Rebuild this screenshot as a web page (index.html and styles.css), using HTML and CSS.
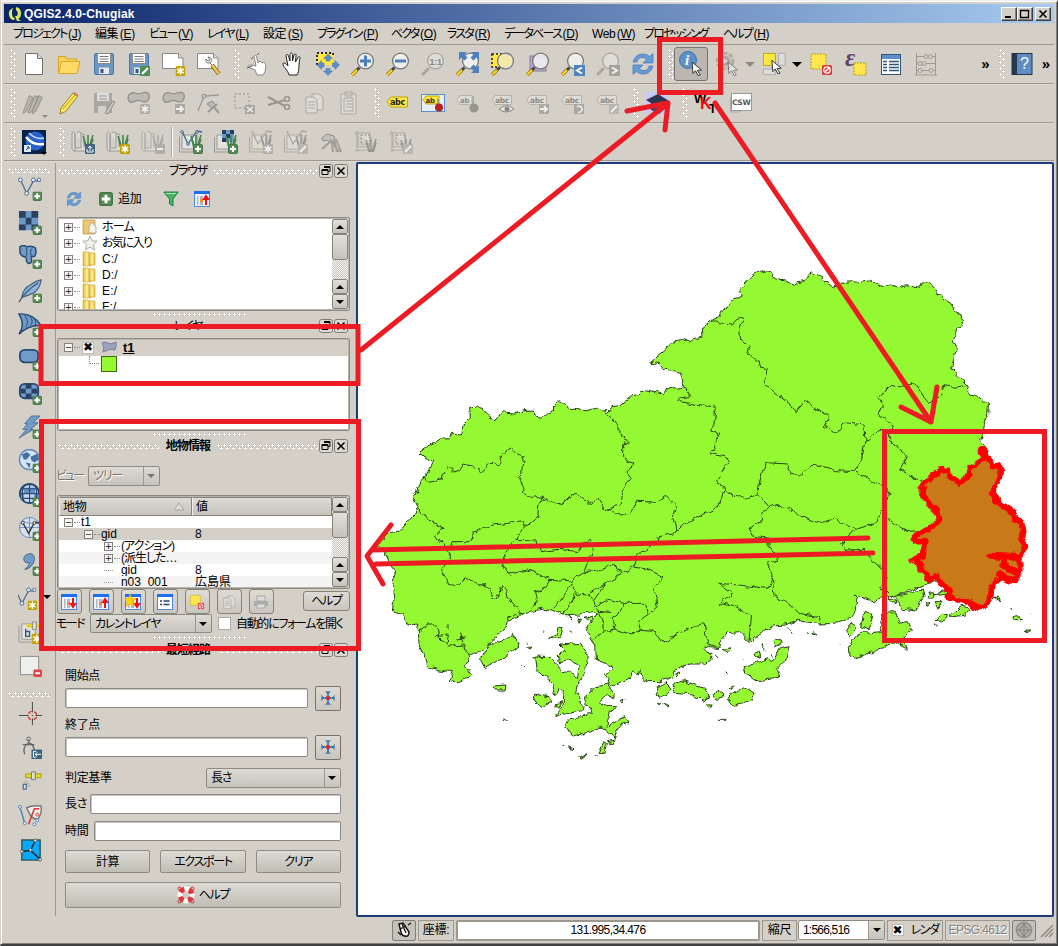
FILE: index.html
```html
<!DOCTYPE html>
<html lang="ja">
<head>
<meta charset="utf-8">
<title>QGIS2.4.0-Chugiak</title>
<link rel="stylesheet" href="styles.css">
</head>
<body>
<svg class="defs" width="0" height="0" aria-hidden="true">
<defs>
<linearGradient id="gold" x1="0" x2="1"><stop offset="0" stop-color="#e0bc3c"/><stop offset=".5" stop-color="#fff0a0"/><stop offset="1" stop-color="#e8c040"/></linearGradient>
<!-- badges -->
<symbol id="plus" viewBox="0 0 10 10"><rect x=".5" y=".5" width="9" height="9" rx="1.5" fill="#5a8c5a" stroke="#3f7745"/><path d="M5 2v6M2 5h6" stroke="#fff" stroke-width="2"/></symbol>
<symbol id="star" viewBox="0 0 10 10"><rect width="10" height="10" rx="1.5" fill="#c4a000"/><path d="M5 1.2v7.6M1.7 3l6.6 4M8.300 3l-6.600 4" stroke="#fff" stroke-width="1.500"/></symbol>
<symbol id="gstar" viewBox="0 0 10 10"><rect width="10" height="10" rx="1.5" fill="#b0ada6"/><path d="M5 1.200v7.600M1.700 3l6.600 4M8.300 3l-6.600 4" stroke="#eee" stroke-width="1.500"/></symbol>
<symbol id="garr" viewBox="0 0 10 10"><rect width="10" height="10" rx="1" fill="#aaa7a0"/><path d="M1 5h6M5 2l3 3-3 3" stroke="#eee" stroke-width="1.800" fill="none"/></symbol>
<symbol id="gpen" viewBox="0 0 10 10"><rect width="10" height="10" rx="1" fill="#b8b5ae"/><path d="M2 8l6-6" stroke="#eee" stroke-width="2"/></symbol>
<symbol id="gmin" viewBox="0 0 10 10"><rect width="10" height="10" rx="1" fill="#b0ada6"/><path d="M2 5h6" stroke="#eee" stroke-width="2"/></symbol>
<symbol id="nogo" viewBox="0 0 10 10"><rect width="10" height="10" rx="1.500" fill="#d83c3c"/><circle cx="5" cy="5" r="3.200" fill="none" stroke="#fff" stroke-width="1.200"/><path d="M3 7l4-4" stroke="#fff" stroke-width="1.200"/></symbol>
<symbol id="cursor" viewBox="0 0 12 15"><path d="M1 1l9.500 8-4.200.3 3 4.700-2.300.5-2.500-4.800L2 12.500z" fill="#fff" stroke="#333"/></symbol>
<!-- file icons -->
<symbol id="new" viewBox="0 0 24 24"><path d="M3.500 1.500h12l5 5v16h-17z" fill="#fff" stroke="#6f6f6f"/><path d="M15.500 1.500v5h5" fill="#ddd" stroke="#6f6f6f"/></symbol>
<symbol id="open" viewBox="0 0 24 24"><path d="M1.500 21V4.500h7l1 2.500h10v3" fill="#f6d25a" stroke="#d8a21c"/><path d="M1.500 21.500l3-12h18.500l-3 12z" fill="#ffd966" stroke="#dba827"/></symbol>
<symbol id="floppy" viewBox="0 0 24 24"><rect x="2.500" y="1.500" width="19" height="21" rx="1.500" fill="#6e96c4" stroke="#4a74a8"/><rect x="5.500" y="1.500" width="13" height="10" fill="#fff" stroke="#8a8a8a"/><path d="M7.500 4.500h9M7.500 7h9M7.500 9.500h9" stroke="#777"/><rect x="7" y="15.500" width="10" height="6.500" fill="#e8e8e8"/><path d="M8.500 17h3v4h-3z" fill="#35578a"/></symbol>
<symbol id="save" viewBox="0 0 24 24"><use href="#floppy"/></symbol>
<symbol id="saveas" viewBox="0 0 24 24"><use href="#floppy"/><rect x="13" y="14" width="10" height="10" rx="1" fill="#4b8f57"/><path d="M15 22l6-6" stroke="#fff" stroke-width="2.200"/></symbol>
<symbol id="compnew" viewBox="0 0 24 24"><path d="M.5 1.500h16l4.500 4.500v10.500H.5z" fill="#fff" stroke="#888"/><path d="M16.500 1.500V6H21" fill="#ddd" stroke="#888"/><use href="#star" x="13.500" y="14" width="10" height="10"/></symbol>
<symbol id="compman" viewBox="0 0 24 24"><path d="M.5 1.500h16l4.500 4.500v10.500H.5z" fill="#fff" stroke="#888"/><path d="M16.500 1.500V6H21" fill="#ddd" stroke="#888"/><path d="M9 7c-1 4 2 5 5 3 2-2 0-5-3-5l2 3-2 1zM13 11l3 3" fill="#eee" stroke="#777"/><path d="M15 13l7 9" stroke="#765b18" stroke-width="4"/><path d="M15 13l7 9" stroke="#f0cc50" stroke-width="2.500"/></symbol>
<!-- navigation -->
<symbol id="touch" viewBox="0 0 24 24"><path d="M8 4c1-1 2-1 2.500 0l1.500 7 2-2 2 2 2-1 2 3-1 7-2 3h-6l-2-5-7-3c0-2 1-2 3-2l5 1z" fill="#fff" stroke="#888"/><path d="M1 16l5-2M7 5L5 7M11 3l2-2" stroke="#555"/></symbol>
<symbol id="hand" viewBox="0 0 24 24"><path d="M8 23c-1-5-6-8-6-11 0-2 2-1.500 5 2L5 4c0-2 2-2 2.500 0L9 9V2.500c0-2 2.500-2 2.500 0V9l1.500-6c.5-2 2.500-1 2 1L14.500 10l2.500-4.500c1-1.500 2.500-.5 2 1-2 6 0 12-3 16.500z" fill="#fff" stroke="#222"/></symbol>
<symbol id="panto" viewBox="0 0 24 24"><path d="M1 1h16v12H1z" fill="#ffe640"/><path d="M1 13V1h16v3" fill="none" stroke="#222" stroke-width="1.800" stroke-dasharray="2 2"/><g fill="#5d8fca" stroke="#3f70a8" stroke-width=".5"><path d="M12 2l4.500 4.500H14V9h-4V6.500H7.500zM12 23.500l4.500-4.500H14v-2.500h-4V19H7.500zM1 13l4.500-4.500V11H8v4H5.500v2.500zM23.500 13L19 8.500V11h-2.500v4H19v2.500z"/></g></symbol>
<symbol id="glass" viewBox="0 0 24 24"><path d="M8.500 15.500L5 19" stroke="#444" stroke-width="3"/><path d="M6 18L1 23" stroke="#8a6c10" stroke-width="3.400"/><path d="M6 18L1 23" stroke="#ffd52a" stroke-width="2.200"/><circle cx="14.500" cy="9" r="7.900" fill="#f4f6f4" fill-opacity=".8" stroke="#777" stroke-width="1.300"/></symbol>
<symbol id="gglass" viewBox="0 0 24 24"><path d="M8 16L1 23" stroke="#aaa69e" stroke-width="3"/><circle cx="14.500" cy="9" r="7.900" fill="#dedcd6" stroke="#aaa69e" stroke-width="1.300"/></symbol>
<symbol id="zin" viewBox="0 0 24 24"><use href="#glass"/><path d="M14.500 3.500v11M9 9h11" stroke="#4d80bd" stroke-width="3"/></symbol>
<symbol id="zout" viewBox="0 0 24 24"><use href="#glass"/><path d="M9 9h11" stroke="#4d80bd" stroke-width="3"/></symbol>
<symbol id="z11" viewBox="0 0 24 24"><use href="#gglass"/><text x="8.500" y="12.500" font-family="Liberation Sans" font-weight="bold" font-size="9" fill="#8a8680">1:1</text></symbol>
<symbol id="zfull" viewBox="0 0 24 24"><use href="#glass"/><path d="M3 0h8L8.500 2.500l3 3-3 3-3-3L3 8zM23 0v8l-2.500-2.500-3 3-3-3 3-3L15 0zM23 21h-8l2.500-2.500-3-3 3-3 3 3L23 13z" fill="#4d80bd"/></symbol>
<symbol id="zsel" viewBox="0 0 24 24"><rect x="1" y="2" width="16" height="13" fill="#ffe640" stroke="#222" stroke-width="1.500" stroke-dasharray="2 2"/><use href="#glass"/><circle cx="14.500" cy="9" r="6" fill="#f1e9a4"/></symbol>
<symbol id="zlay" viewBox="0 0 24 24"><rect x="4" y="4" width="16" height="15" fill="#baa9ca" stroke="#8b7c98"/><use href="#glass"/></symbol>
<symbol id="zlast" viewBox="0 0 24 24"><use href="#glass"/><rect x="13" y="13" width="11" height="11" fill="#4f83bd"/><path d="M21 15.500l-5 3 5 3" fill="none" stroke="#fff" stroke-width="2"/></symbol>
<symbol id="znext" viewBox="0 0 24 24"><use href="#gglass"/><rect x="13" y="13" width="11" height="11" fill="#a5a29b"/><path d="M16 15.500l5 3-5 3" fill="none" stroke="#eee" stroke-width="2"/></symbol>
<symbol id="refresh" viewBox="0 0 24 24"><g fill="#689ad4" stroke="#4379b5" stroke-width=".7"><path d="M2 10C4 1 14 0 18.500 4.500L22 1.500V11H12l3.500-3.500C12 4 7 5 6 10z"/><path d="M22 14c-2 9-12 10-16.500 5.500L2 22.500V13h10l-3.500 3.500C12 20 17 19 18 14z"/></g></symbol>
<!-- attributes -->
<symbol id="info" viewBox="0 0 26 26"><circle cx="10" cy="9" r="8.500" fill="#5d91cc" stroke="#3e72ae"/><text x="7" y="14" font-family="Liberation Serif" font-style="italic" font-weight="bold" font-size="15" fill="#fff">i</text><use href="#cursor" x="13" y="10" width="12" height="15"/></symbol>
<symbol id="action" viewBox="0 0 24 24"><circle cx="10" cy="9" r="8" fill="#cbc7c0" stroke="#b0aca4" stroke-width="3" stroke-dasharray="4 2"/><circle cx="10" cy="9" r="5" fill="#aaa69e"/><path d="M8 6l5 3-5 3z" fill="#ddd"/><g opacity=".5"><use href="#cursor" x="12" y="9" width="12" height="15"/></g></symbol>
<symbol id="select" viewBox="0 0 26 26"><rect x="1.500" y="1.500" width="13" height="13" fill="#ffe640" stroke="#bca514"/><path d="M18 1.500h7v13h-7zM1.500 18.500h13v6h-13z" fill="#ddd" stroke="#aaa"/><use href="#cursor" x="9" y="8" width="14" height="16"/></symbol>
<symbol id="desel" viewBox="0 0 24 24"><rect x="2" y="2" width="15" height="15" fill="#ffe64d" stroke="#b79e10" stroke-dasharray="2 1"/><use href="#nogo" x="13" y="13" width="10" height="10"/></symbol>
<symbol id="eps" viewBox="0 0 24 24"><text x="1" y="14" font-family="Liberation Serif" font-style="italic" font-weight="bold" font-size="25" fill="#633e70">ε</text><rect x="10" y="11" width="12" height="12" fill="#ffe64d" stroke="#b79e10" stroke-dasharray="2 1"/></symbol>
<symbol id="table" viewBox="0 0 24 24"><rect x="2.500" y="2.500" width="19" height="20" fill="#fff" stroke="#315577"/><rect x="3" y="3" width="18" height="4" fill="#5d8fca"/><path d="M4 9.500h4M4 12.500h4M4 15.500h4M4 18.500h4M10 9.500h10M10 12.500h10M10 15.500h10M10 18.500h10" stroke="#315577" stroke-width="1.300"/></symbol>
<symbol id="abacus" viewBox="0 0 24 24"><g fill="#d4d0c8" stroke="#9d9991"><path d="M2.500 1v22M21.500 1v22M1 23h22M3 4.500h18M3 11.500h18M3 18.500h18"/><circle cx="12" cy="4.500" r="2"/><circle cx="16.500" cy="4.500" r="2"/><circle cx="6" cy="11.500" r="2"/><circle cx="10" cy="11.500" r="2"/><circle cx="6" cy="18.500" r="2"/><circle cx="17" cy="18.500" r="2"/></g></symbol>
<symbol id="book" viewBox="0 0 24 24"><rect x="2" y="1.500" width="20" height="21" fill="#5d8dc4" stroke="#26384d"/><rect x="2" y="1" width="5" height="22" fill="#26384d"/><text x="10" y="17" font-family="Liberation Sans" font-size="16" fill="#fff">?</text></symbol>
<!-- editing -->
<symbol id="pencils" viewBox="0 0 26 26"><g fill="#b7b4ad" stroke="#918e87"><path d="M2 21l6-16 4 2-7 15-4 2zM7 22l7-17 4 2-7 15-4 2zM11 23l7-18 4 2-7 15-4 3z"/></g></symbol>
<symbol id="pencil" viewBox="0 0 24 24"><path d="M4 17L16 2l4.500 3.500-12 15L3 23z" fill="#ffe75d" stroke="#9a8520"/><path d="M16 2l4.500 3.500 1-1.500-4-3z" fill="#c77"/><path d="M6 18L18 4" stroke="#b69a18"/></symbol>
<symbol id="gsave" viewBox="0 0 24 24"><path d="M2 2h18v20H2z" fill="#aaa7a0"/><path d="M5 2h12v8H5z" fill="#ddd"/><path d="M7 5h8M7 8h8" stroke="#999"/><path d="M6 15h8v7H6z" fill="#d4d0c8"/><path d="M13 22l8-12 2 1-7 12z" fill="#ccc" stroke="#918e87"/></symbol>
<symbol id="gblob" viewBox="0 0 24 24"><path d="M1 7c0-4 4-6 7-5s4 1 7 0c6-2 8 1 7 5s-4 5-8 3-5 0-8 1-5-1-5-4z" fill="#bdbab3" stroke="#918e87" stroke-width="1.300"/></symbol>
<symbol id="addf" viewBox="0 0 24 24"><use href="#gblob"/><use href="#gstar" x="13" y="13" width="10" height="10"/></symbol>
<symbol id="movef" viewBox="0 0 24 24"><use href="#gblob"/><use href="#garr" x="13" y="13" width="10" height="10"/></symbol>
<symbol id="node" viewBox="0 0 24 24"><path d="M1 20L7 5l15-1" fill="none" stroke="#999" stroke-width="1.300"/><circle cx="7" cy="5" r="2" fill="#ccc" stroke="#888"/><path d="M10 13l5-3 4 4-4 3z" fill="#bbb" stroke="#888"/><path d="M16 15l6 7M11 21l9-8" stroke="#999" stroke-width="2"/></symbol>
<symbol id="gdel" viewBox="0 0 24 24"><path d="M3 3h14v14H3z" fill="none" stroke="#a5a29b" stroke-width="1.300" stroke-dasharray="2 2"/><rect x="13" y="14" width="10" height="9" fill="#aaa7a0"/><path d="M15 16l6 5m0-5l-6 5" stroke="#eee" stroke-width="1.500"/></symbol>
<symbol id="scis" viewBox="0 0 24 24"><path d="M1 6l17 9M1 14l17-5" stroke="#9a968f" stroke-width="2"/><circle cx="20" cy="8" r="2.500" fill="none" stroke="#9a968f" stroke-width="1.500"/><circle cx="20" cy="16" r="2.500" fill="none" stroke="#9a968f" stroke-width="1.500"/></symbol>
<symbol id="copy" viewBox="0 0 24 24"><g fill="#dedbd4" stroke="#aaa7a0"><path d="M10 3h7l4 4v12H10z"/><path d="M4 6h8l3 3v13H4z"/><path d="M6 11h7M6 14h7M6 17h7"/></g></symbol>
<symbol id="paste" viewBox="0 0 24 24"><g fill="#dedbd4" stroke="#aaa7a0"><path d="M4 3h15v20H4zM8 1h7v4H8zM7 7h9v13H7z"/><path d="M9 10h6M9 13h6M9 16h6"/></g></symbol>
<!-- labels -->
<symbol id="tag" viewBox="0 0 24 24"><path d="M1 11l4-5h16.500v10H5z" fill="#ffe640" stroke="#c3a600"/><text x="4" y="14" font-family="DejaVu Sans" font-weight="bold" font-size="8" fill="#222">abc</text></symbol>
<symbol id="tagpin" viewBox="0 0 24 24"><rect x=".5" y="3.500" width="23" height="17" fill="#e6eefa" stroke="#5a90d0"/><path d="M2 8.500l3-3.500h13v8H5z" fill="#ffe640" stroke="#c3a600"/><text x="4.500" y="11.500" font-family="DejaVu Sans" font-weight="bold" font-size="7" fill="#333">ab</text><path d="M17 8v8" stroke="#888" stroke-width="1.500"/><circle cx="18" cy="16.500" r="4" fill="#b52222"/></symbol>
<symbol id="gtag" viewBox="0 0 24 24"><path d="M1 9l3-4.500h16.500v9H4z" fill="#dfdcd5" stroke="#b6b3ac"/><text x="4" y="12" font-family="DejaVu Sans" font-weight="bold" font-size="7.500" fill="#8e8b84">abc</text></symbol>
<symbol id="gpin" viewBox="0 0 24 24"><path d="M1 8.500l3-4h12v9H4z" fill="#dfdcd5" stroke="#b6b3ac"/><text x="4" y="12" font-family="DejaVu Sans" font-weight="bold" font-size="7" fill="#8e8b84">ab</text><path d="M17 5v10" stroke="#aaa" stroke-width="2"/><circle cx="18" cy="17" r="4.500" fill="#99968f"/></symbol>
<symbol id="geye" viewBox="0 0 24 24"><use href="#gtag"/><path d="M8 18q8-7 15 0q-8 6-15 0z" fill="#e5e2dc" stroke="#888"/><circle cx="16" cy="18" r="2.500" fill="#888"/></symbol>
<symbol id="gtarr" viewBox="0 0 24 24"><use href="#gtag"/><use href="#garr" x="13" y="13" width="10" height="10"/></symbol>
<symbol id="gtrot" viewBox="0 0 24 24"><use href="#gtag"/><rect x="13" y="13" width="10" height="10" fill="#aaa7a0"/><path d="M16 16a3 3 0 1 1 1 5" fill="none" stroke="#eee" stroke-width="1.500"/></symbol>
<symbol id="gtpen" viewBox="0 0 24 24"><use href="#gtag"/><use href="#gpen" x="13" y="13" width="10" height="10"/></symbol>
<symbol id="cap" viewBox="0 0 24 24"><rect x="1" y="1" width="22" height="22" fill="#c8c8f4"/><path d="M1 9l12-6 11 7-10 7z" fill="#2d3550"/><path d="M6 12v7l8 4 7-6v-4" fill="#414861"/></symbol>
<symbol id="wkt" viewBox="0 0 24 24"><text x="0" y="12" font-family="Liberation Sans" font-weight="bold" font-size="13">W</text><text x="6" y="18" font-family="Liberation Sans" font-weight="bold" font-size="16" fill="#e11">K</text><text x="15" y="22" font-family="Liberation Sans" font-weight="bold" font-size="12">T</text></symbol>
<symbol id="csw" viewBox="0 0 24 24"><path d="M1.500 21V6h10v15z" fill="none" stroke="#aaa"/><rect x="2.500" y="2.500" width="20" height="17" fill="#fff" stroke="#999"/><text x="3" y="13.500" font-family="DejaVu Sans" font-weight="bold" font-size="7.500" fill="#555">CSW</text></symbol>
<!-- grass -->
<symbol id="earth" viewBox="0 0 26 26"><rect x="1" y="1" width="24" height="24" fill="#08234a"/><circle cx="14" cy="12" r="9.500" fill="#2a62cc"/><path d="M5 8q7 9 18 7" stroke="#fff" stroke-width="2.500" fill="none"/><path d="M8 4q7 7 15 5" stroke="#cfe0ff" stroke-width="1.500" fill="none"/><rect x="3" y="16" width="7" height="7" fill="#dceaff"/><path d="M5 21l3-3m-2 0h2v2" stroke="#246" fill="none"/><path d="M20 23h6l-3 3z"/></symbol>
<symbol id="roll" viewBox="0 0 24 24"><path d="M4 4v17h15M1 3v16l3 3M1 3q2-3 3 1v14M6 3q2-3 4 0v15H4M10 4h3v13" fill="#dedbd4" stroke="#999"/></symbol>
<symbol id="grass" viewBox="0 0 24 24"><path d="M16 18l-4-12M17 18V5M18 18l4-13M15 18l-2-8M19 18l3-9" stroke="#43854b" stroke-width="1.600"/></symbol>
<symbol id="ggrass" viewBox="0 0 24 24"><path d="M16 18l-4-12M17 18V5M18 18l4-13M15 18l-2-8M19 18l3-9" stroke="#999690" stroke-width="1.500"/></symbol>
<symbol id="g1" viewBox="0 0 24 24"><use href="#roll"/><use href="#grass"/><rect x="14" y="14" width="10" height="10" rx="1" fill="#426480"/><path d="M19 21v-5m-2 2l2-2 2 2M16 19v3h6v-3" stroke="#fff" fill="none"/></symbol>
<symbol id="g2" viewBox="0 0 24 24"><use href="#roll"/><use href="#grass"/><use href="#star" x="14" y="14" width="10" height="10"/></symbol>
<symbol id="g3" viewBox="0 0 24 24"><g opacity=".65"><use href="#roll"/><use href="#ggrass"/></g><use href="#gmin" x="14" y="14" width="10" height="10"/></symbol>
<symbol id="g4" viewBox="0 0 24 24"><path d="M.5 7v15H20" fill="none" stroke="#999"/><path d="M3 5h15v14H3z" fill="#e5e3de" stroke="#999"/><use href="#grass"/><path d="M3 1l6 13 9-13 5 1" fill="none" stroke="#35658c" stroke-width="1.300"/><g fill="#fff" stroke="#35658c"><circle cx="3" cy="2" r="1.300"/><circle cx="9" cy="14" r="1.300"/><circle cx="18" cy="2" r="1.300"/></g><use href="#plus" x="14" y="14" width="10" height="10"/></symbol>
<symbol id="g5" viewBox="0 0 24 24"><path d="M.5 7v15H20" fill="none" stroke="#999"/><path d="M3 5h15v14H3z" fill="#e5e3de" stroke="#999"/><path d="M8 0h12v12H8z" fill="#6e99c7"/><path d="M8 0h4v4H8zM16 0h4v4h-4zM12 4h4v4h-4zM8 8h4v4H8z" fill="#233e60"/><use href="#grass"/><use href="#plus" x="14" y="14" width="10" height="10"/></symbol>
<symbol id="g6b" viewBox="0 0 24 24"><path d="M.5 7v15H20" fill="none" stroke="#b0ada6"/><path d="M3 5h15v14H3z" fill="#dedbd5" stroke="#b0ada6"/><use href="#ggrass"/><path d="M3 1l6 13 9-13 5 1" fill="none" stroke="#aaa7a0" stroke-width="1.300"/></symbol>
<symbol id="g6" viewBox="0 0 24 24"><use href="#g6b"/><use href="#gstar" x="14" y="14" width="10" height="10"/></symbol>
<symbol id="g7" viewBox="0 0 24 24"><use href="#g6b"/><use href="#gpen" x="14" y="14" width="10" height="10"/></symbol>
<symbol id="g8" viewBox="0 0 24 24"><path d="M3 8l5-4 7 2 1 4-4 3-4-3-4 1z" fill="#c5c2bb" stroke="#8f8c85"/><path d="M11 9l9 13M3 19l9-8M14 22l-1-10M18 22l-3-13M22 22l-5-13" stroke="#a19e97" stroke-width="2"/></symbol>
<symbol id="g9" viewBox="0 0 24 24"><path d="M3 1v19h18M3 1q-3 1-1 4M1 20q2 3 4 0M4 3h12v14H4z" fill="#dedbd4" stroke="#aaa7a0"/><path d="M7 5h9v9H7z" fill="none" stroke="#888" stroke-dasharray="2 1.500"/><g transform="translate(0 4)"><use href="#ggrass"/></g></symbol>
<symbol id="g10" viewBox="0 0 24 24"><use href="#g9"/><use href="#gpen" x="14" y="14" width="10" height="10"/></symbol>
<!-- layer toolbar -->
<symbol id="v1" viewBox="0 0 24 24"><path d="M3 4l6 13 7-13h6" fill="none" stroke="#4a6c8c" stroke-width="1.300"/><g fill="#e8eef6" stroke="#4a6c8c"><circle cx="2.500" cy="3" r="2"/><circle cx="9" cy="17" r="2"/><circle cx="16" cy="3" r="2"/><circle cx="22" cy="3" r="1.800"/></g></symbol>
<symbol id="lvec" viewBox="0 0 26 26"><use href="#v1" width="24" height="24"/><use href="#plus" x="15" y="15" width="10" height="10"/></symbol>
<symbol id="lras" viewBox="0 0 26 26"><path d="M1 0h20v20H1z" fill="#6b98c8"/><path d="M1 0h7v7H1zM14 0h7v7h-7zM8 7h6v7H8zM1 14h7v6H1zM14 14h7v6h-7z" fill="#2b415f"/><use href="#plus" x="15" y="15" width="10" height="10"/></symbol>
<symbol id="lpg" viewBox="0 0 26 26"><path d="M2 2q4-3 7 0 5-2 9 1 2 5-1 9l-3 0v6q-3 3-5-1l-1-5q-4 1-6-4z" fill="#6f9bcb" stroke="#2b4a70" stroke-width="1.500"/><path d="M9 3v8M14 4q-2 4 0 8" stroke="#2b4a70" fill="none"/><use href="#plus" x="15" y="15" width="10" height="10"/></symbol>
<symbol id="lfeather" viewBox="0 0 26 26"><path d="M4 19Q5 10 13 6 18 2 24 1q-1 8-7 13l-7 3z" fill="#8fb4dc" stroke="#46607c" stroke-width="1.300"/><path d="M1 24Q8 12 21 4" stroke="#46607c" stroke-width="1.300" fill="none"/><use href="#plus" x="15" y="15" width="10" height="10"/></symbol>
<symbol id="lsail" viewBox="0 0 26 26"><path d="M1 1q15-1 23 12-13-1-23 9 7-9 0-21z" fill="#6f9bcb" stroke="#2b4a70" stroke-width="1.500"/><path d="M7 2q5 7 1 13M12 3q5 5 1 10M17 6q3 3 1 7" fill="none" stroke="#2b4a70"/><use href="#plus" x="15" y="15" width="10" height="10"/></symbol>
<symbol id="lora" viewBox="0 0 26 26"><rect x="2" y="3" width="19" height="13" rx="5" fill="#6f9bcb" stroke="#2b4a70" stroke-width="2"/><use href="#plus" x="15" y="15" width="10" height="10"/></symbol>
<symbol id="lorar" viewBox="0 0 26 26"><rect x="2" y="3" width="19" height="15" rx="5" fill="#6f9bcb" stroke="#2b4a70" stroke-width="2"/><path d="M8 3h6v5H8zM3 8h5v5H3zM14 8h6v5h-6zM8 13h6v5H8z" fill="#2b415f"/><use href="#plus" x="15" y="15" width="10" height="10"/></symbol>
<symbol id="lbolt" viewBox="0 0 26 26"><path d="M14 1h9l-7 7h5l-8 7h3L1 24l8-9H5l5-6H7z" fill="#6f9bcb" stroke="#46607c" stroke-width=".8"/><use href="#plus" x="15" y="15" width="10" height="10"/></symbol>
<symbol id="lwms" viewBox="0 0 26 26"><circle cx="12" cy="11" r="10.500" fill="#d5e4f4" stroke="#5e88b6" stroke-width="1.400"/><path d="M4 6l5-3 4 3-4 5-3 0zM13 8l7-3 2 6-5 3-3-2zM8 14l5 1-1 5z" fill="#44709e"/><use href="#plus" x="15" y="15" width="10" height="10"/></symbol>
<symbol id="lwcs" viewBox="0 0 26 26"><circle cx="12" cy="11" r="10" fill="#c6daf0" stroke="#2b4a70" stroke-width="2"/><path d="M6 5h12v6h4v6h-5v-6H6v6H3v-6h3z" fill="#5f8fc4"/><path d="M2 11h20M12 1v20M6 3q-3 8 0 16M18 3q3 8 0 16M4 6h16M4 16h16" stroke="#2b4a70" stroke-width="1.200" fill="none"/><use href="#plus" x="15" y="15" width="10" height="10"/></symbol>
<symbol id="lwfs" viewBox="0 0 26 26"><circle cx="12" cy="11" r="10.500" fill="#d7e2ee" stroke="#5e88b6"/><path d="M2 11h20M12 1v20M5 4q8 5 15 0" stroke="#6a94c2" fill="none"/><path d="M5 6l6 11 6-11h5" fill="none" stroke="#333" stroke-width="1.400"/><circle cx="5" cy="6" r="1.500" fill="#fff" stroke="#333"/><circle cx="17" cy="6" r="1.500" fill="#fff" stroke="#333"/><use href="#plus" x="15" y="15" width="10" height="10"/></symbol>
<symbol id="lcomma" viewBox="0 0 26 26"><path d="M11 2c6-2 8 6 4 11-2 3-5 5-8 5 3-2 5-5 5-7-4 1-6-1-6-4s2-4 5-5z" fill="#6f9bcb" stroke="#46607c"/><use href="#plus" x="15" y="15" width="10" height="10"/></symbol>
<symbol id="lnew" viewBox="0 0 26 26"><g transform="translate(-5 1)"><use href="#v1" width="24" height="24"/></g><use href="#star" x="10" y="15" width="10" height="10"/></symbol>
<symbol id="lgps" viewBox="0 0 26 26"><path d="M1 6v17h13" fill="none" stroke="#999"/><path d="M4 4h14v16H4z" fill="#e5e3de" stroke="#999"/><path d="M8 9v8h4v-5H8" fill="none" stroke="#345a86" stroke-width="1.500"/><path d="M9 4h14v4H9z" fill="#e2d820"/><path d="M15 2h4v8h-4z" fill="#ddd" stroke="#888"/><use href="#star" x="14" y="14" width="11" height="11"/></symbol>
<symbol id="lrem" viewBox="0 0 26 26"><path d="M2.500 2.500h19v19h-19z" fill="#eeeeec" stroke="#888"/><rect x="16" y="16" width="9" height="8" rx="1.500" fill="#de4545"/><path d="M18 20h5" stroke="#fff" stroke-width="2"/></symbol>
<symbol id="cross" viewBox="0 0 26 26"><path d="M15 0v11M15 13.500v1M15 17v7M1 14h10M14.500 14h1M18 14h7" stroke="#444"/><circle cx="15" cy="14" r="4.500" fill="none" stroke="#c22" stroke-width="1.300" stroke-dasharray="4 3.070" stroke-dashoffset="-1.500"/></symbol>
<symbol id="compass" viewBox="0 0 26 26"><path d="M11 4v4M11 7q-7 5-4 12M11 7q5 1 6 8M5 9h12" stroke="#666" stroke-width="1.400" fill="none"/><circle cx="11" cy="3" r="2" fill="none" stroke="#666"/><rect x="14" y="14" width="11" height="10" rx="1" fill="#3e6380"/><path d="M19 16h-3v6h3M24 19h-6m2-2l-2 2 2 2" stroke="#fff" fill="none"/></symbol>
<symbol id="sat" viewBox="0 0 26 26"><path d="M8 4h16v4H8z" fill="#e2d820" stroke="#aaa017"/><path d="M14 2h4v8h-4z" fill="#ddd" stroke="#777"/><path d="M9 11q0 4 4 4M7 11q0 6 6 6" fill="none" stroke="#aaa"/><path d="M5.500 15h3v5h-3z" fill="#dfe8f2" stroke="#4a6c8c" stroke-width="1.300"/></symbol>
<symbol id="topo" viewBox="0 0 26 26"><path d="M2 3l5 17" stroke="#4d80bd" stroke-width="1.500"/><path d="M9 4q5-3 15-2 1 8-3 13-4 2-8-3z" fill="#f1efec" stroke="#777" stroke-width="1.500"/><path d="M11 21l6-16h5" stroke="#d33" stroke-width="1.600" fill="none"/><circle cx="20" cy="11" r="1.500" fill="none" stroke="#d33"/><g fill="#fff" stroke="#4d80bd"><circle cx="2" cy="3" r="1.500"/><circle cx="7" cy="20" r="1.500"/><circle cx="17" cy="21" r="1.500"/><circle cx="20" cy="17" r="1.500"/></g></symbol>
<symbol id="road" viewBox="0 0 26 26"><path d="M4 2h19v21H4z" fill="#00a8ff" stroke="#355" stroke-width="1.500"/><path d="M18 2l-5 11-9 1M13 13l10 9" fill="none" stroke="#222" stroke-width="1.500"/><g fill="#fff" stroke="#555"><circle cx="18" cy="2.500" r="1.500"/><circle cx="13" cy="12.500" r="1.500"/><circle cx="4" cy="14" r="1.500"/><circle cx="23" cy="22.500" r="1.500"/></g></symbol>
<!-- small icons -->
<symbol id="restore" viewBox="0 0 14 14"><rect x=".5" y=".5" width="13" height="13" rx="2" fill="#dbd8d1" stroke="#807c74"/><path d="M5 2.500h6v5H9M5 3.500h6" fill="none" stroke="#000"/><path d="M3 5.500h6v5H3zM3 6.500h6" fill="#dbd8d1" stroke="#000"/></symbol>
<symbol id="close" viewBox="0 0 14 14"><rect x=".5" y=".5" width="13" height="13" rx="2" fill="#dbd8d1" stroke="#807c74"/><path d="M3.500 3.500l7 7m0-7l-7 7" stroke="#000" stroke-width="1.500"/></symbol>
<symbol id="panel" viewBox="0 0 16 16"><rect x=".5" y=".5" width="15" height="15" fill="#eef2fb" stroke="#4c8be0"/><path d="M0 0h16v3H0z" fill="#1c6ff0"/><path d="M3 5h1.500v9H3M6 5h3v3H6M6 11h3v3H6z" fill="#b0b8c8"/><path d="M6 8h3v3H6z" fill="#f09020"/></symbol>
<symbol id="pdown" viewBox="0 0 16 16"><use href="#panel"/><path d="M12 4v6M10 10L12 13l2-3z" stroke="#e11" stroke-width="2" fill="#e11"/></symbol>
<symbol id="pup" viewBox="0 0 16 16"><use href="#panel"/><path d="M12 14V8M10 8L12 5l2 3z" stroke="#e11" stroke-width="2" fill="#e11"/></symbol>
<symbol id="pstar" viewBox="0 0 16 16"><use href="#pdown"/><path d="M5 0l1.700 4L11 4.500 8 7.500l1 5-4-2.500-4 2.500 1-5-3-3L3.500 4z" fill="#ffd400" stroke="#e0a000" stroke-width=".6"/></symbol>
<symbol id="plist" viewBox="0 0 16 16"><rect x=".5" y=".5" width="15" height="15" fill="#fff" stroke="#4c8be0"/><path d="M0 0h16v3H0z" fill="#1c6ff0"/><path d="M3 7h2M3 10.500h2M6.500 7h6M6.500 10.500h6" stroke="#246" stroke-width="1.400"/></symbol>
<symbol id="printer" viewBox="0 0 16 16"><path d="M4 2h8v5H4z" fill="#ddd" stroke="#aaa"/><path d="M1 7h14v5H1z" fill="#aaa"/><path d="M4 10h8v4H4z" fill="#ddd" stroke="#aaa"/></symbol>
<symbol id="funnel" viewBox="0 0 16 16"><path d="M.8 1h14.400L10 8v7l-3.500-2V8z" fill="#45b562" stroke="#23803c"/><path d="M3 2.500h10" stroke="#a6e6b4"/></symbol>
<symbol id="folder" viewBox="0 0 16 16"><path d="M1 1h5l1 1h2v13H1z" fill="url(#gold)" stroke="#c79e22" stroke-width=".6"/><path d="M7 2h6v12H7z" fill="url(#gold)" stroke="#c79e22" stroke-width=".6"/></symbol>
<symbol id="home" viewBox="0 0 16 16"><path d="M1 1h12v14H1z" fill="#ecc878" stroke="#b98f35" stroke-width=".7"/><path d="M7 14V8l3-5 4 5v6z" fill="#f4f1e8" stroke="#999" stroke-width=".7"/></symbol>
<symbol id="fav" viewBox="0 0 16 16"><path d="M8 1l2.200 4.800 5 .4-3.800 3.500 1.400 5.300L8 12.200 3.200 15l1.400-5.300L.8 6.200l5-.4z" fill="#eeefe8" stroke="#abaca4"/></symbol>
<symbol id="poly" viewBox="0 0 18 14"><path d="M2 2q3-2 6 0t8-1q1 4-1 8-5-1-7 0l-5 2q2-5-1-9z" fill="#9aa3bb" stroke="#77809a"/></symbol>
<symbol id="fourway" viewBox="0 0 16 16"><path d="M8 1v14M1 8h14" stroke="#2c93dc" stroke-width="2"/><path d="M5.500 1L8 4l2.500-3M5.500 15L8 12l2.500 3M1 5.500L4 8l-3 2.500M15 5.500L12 8l3 2.500" fill="none" stroke="#567"/><circle cx="8" cy="8" r="2.200" fill="#e02424"/></symbol>
<symbol id="ring" viewBox="0 0 18 18"><circle cx="9" cy="9" r="6" fill="none" stroke="#fff" stroke-width="5"/><circle cx="9" cy="9" r="6" fill="none" stroke="#e03838" stroke-width="5" stroke-dasharray="4.710 4.710" stroke-dashoffset="-2.350"/><g fill="none" stroke="#b33"><circle cx="2.500" cy="2.500" r="1.500"/><circle cx="15.500" cy="2.500" r="1.500"/><circle cx="2.500" cy="15.500" r="1.500"/><circle cx="15.500" cy="15.500" r="1.500"/></g></symbol>
<symbol id="mouse" viewBox="0 0 18 18"><path d="M4 3l4-1 6 9q0 5-4 4-3 0-4-4z" fill="#fff" stroke="#111" stroke-width="1.500"/><path d="M5 8l6-3M7 3l4 9M13 4l3-2M3 11l3 3" stroke="#111" stroke-width="1.300"/></symbol>
<symbol id="globe" viewBox="0 0 18 18"><circle cx="9" cy="9" r="7.500" fill="#b5b2ab" stroke="#96938c" stroke-width="2"/><path d="M9 2v14M2 9h14M9 3L4 9l5 6 5-6z" fill="none" stroke="#7f7c75"/></symbol>
<filter id="coast" x="-2%" y="-2%" width="104%" height="104%" color-interpolation-filters="sRGB"><feTurbulence type="fractalNoise" baseFrequency=".045" numOctaves="2" seed="4"/><feDisplacementMap in="SourceGraphic" scale="20" xChannelSelector="R" yChannelSelector="G"/></filter>
</defs>
</svg>

<div class="window">
<header class="titlebar">
<svg class="logo" width="14" height="14" viewBox="0 0 14 14"><path d="M5 1q-5 2-4 7t5 5l1-2q-3 0-3-5t2-5zM8 0q5 1 5 6t-3 6l3 2H9L7 9h2q2-4-1-6z" fill="#d8ee58"/></svg>
<span class="app">QGIS2.4.0-Chugiak</span>
<span class="winbtn"><svg width="16" height="14"><path d="M4 10h6" stroke="#000" stroke-width="2"/></svg></span><span class="winbtn"><svg width="16" height="14"><path d="M3.500 3.500h8v7h-8zM3 3.500h9" fill="none" stroke="#000" stroke-width="1.300"/></svg></span><span class="winbtn last"><svg width="16" height="14"><path d="M4.500 3.500l7 7m0-7l-7 7" stroke="#000" stroke-width="1.600"/></svg></span>
</header>
<nav class="menu"><span>プロジェクト<kbd>(<u>J</u>)</kbd></span><span class="k">編集<kbd>(<u>E</u>)</kbd></span><span>ビュー<kbd>(<u>V</u>)</kbd></span><span>レイヤ<kbd>(<u>L</u>)</kbd></span><span class="k">設定<kbd>(<u>S</u>)</kbd></span><span>プラグイン<kbd>(<u>P</u>)</kbd></span><span>ベクタ<kbd>(<u>O</u>)</kbd></span><span>ラスタ<kbd>(<u>R</u>)</kbd></span><span>データベース<kbd>(<u>D</u>)</kbd></span><span class="k">Web<kbd>(<u>W</u>)</kbd></span><span>プロセッシング</span><span>ヘルプ<kbd>(<u>H</u>)</kbd></span></nav>

<div class="toolbar">
<i class="grip first"></i><b><svg><use href="#new"/></svg></b><b><svg><use href="#open"/></svg></b><b><svg><use href="#save"/></svg></b><b><svg><use href="#saveas"/></svg></b><b><svg><use href="#compnew"/></svg></b><b><svg><use href="#compman"/></svg></b>
<i class="grip"></i><b><svg><use href="#touch"/></svg></b><b><svg><use href="#hand"/></svg></b><b><svg><use href="#panto"/></svg></b><b><svg><use href="#zin"/></svg></b><b><svg><use href="#zout"/></svg></b><b><svg><use href="#z11"/></svg></b><b><svg><use href="#zfull"/></svg></b><b><svg><use href="#zsel"/></svg></b><b><svg><use href="#zlay"/></svg></b><b><svg><use href="#zlast"/></svg></b><b><svg><use href="#znext"/></svg></b><b><svg><use href="#refresh"/></svg></b>
<i class="grip"></i><b class="pressed"><svg><use href="#info"/></svg></b><b><svg><use href="#action"/></svg></b><s class="off"></s><b><svg><use href="#select"/></svg></b><s></s><b><svg><use href="#desel"/></svg></b><b><svg><use href="#eps"/></svg></b><b><svg><use href="#table"/></svg></b><b><svg><use href="#abacus"/></svg></b>
<span class="more">»</span><i class="grip"></i><b><svg><use href="#book"/></svg></b><span class="more end">»</span>
</div>
<div class="toolbar">
<i class="grip first"></i><b class="mini"><svg><use href="#pencils"/></svg></b><b><svg><use href="#pencil"/></svg></b><b><svg><use href="#gsave"/></svg></b><b><svg><use href="#addf"/></svg></b><b><svg><use href="#movef"/></svg></b><b><svg><use href="#node"/></svg></b><b><svg><use href="#gdel"/></svg></b><b><svg><use href="#scis"/></svg></b><b><svg><use href="#copy"/></svg></b><b><svg><use href="#paste"/></svg></b>
<i class="grip"></i><b><svg><use href="#tag"/></svg></b><b><svg><use href="#tagpin"/></svg></b><b><svg><use href="#gpin"/></svg></b><b><svg><use href="#geye"/></svg></b><b><svg><use href="#gtarr"/></svg></b><b><svg><use href="#gtrot"/></svg></b><b><svg><use href="#gtpen"/></svg></b>
<i class="grip"></i><b><svg><use href="#cap"/></svg></b><i class="grip"></i><b><svg><use href="#wkt"/></svg></b><b><svg><use href="#csw"/></svg></b>
</div>
<div class="toolbar low">
<i class="grip first"></i><b><svg class="big"><use href="#earth"/></svg></b><i class="grip"></i><b><svg><use href="#g1"/></svg></b><b><svg><use href="#g2"/></svg></b><b><svg><use href="#g3"/></svg></b><i class="sep"></i><b><svg><use href="#g4"/></svg></b><b><svg><use href="#g5"/></svg></b><b><svg><use href="#g6"/></svg></b><b><svg><use href="#g7"/></svg></b><b><svg><use href="#g8"/></svg></b><b><svg><use href="#g9"/></svg></b><b><svg><use href="#g10"/></svg></b>
</div>

<main class="main">
<aside class="layers">
<i class="hgrip"></i>
<b><svg><use href="#lvec"/></svg></b><b><svg><use href="#lras"/></svg></b><b><svg><use href="#lpg"/></svg></b><b><svg><use href="#lfeather"/></svg></b><b><svg><use href="#lsail"/></svg></b><b><svg><use href="#lora"/></svg></b><b><svg><use href="#lorar"/></svg></b><b><svg><use href="#lbolt"/></svg></b><b><svg><use href="#lwms"/></svg></b><b><svg><use href="#lwcs"/></svg></b><b><svg><use href="#lwfs"/></svg></b><b><svg><use href="#lcomma"/></svg></b><b class="drop"><svg><use href="#lnew"/></svg></b><b><svg><use href="#lgps"/></svg></b><b><svg><use href="#lrem"/></svg></b>
<i class="hgrip second"></i>
<b><svg><use href="#cross"/></svg></b><b><svg><use href="#compass"/></svg></b><b><svg><use href="#sat"/></svg></b><b><svg><use href="#topo"/></svg></b><b><svg><use href="#road"/></svg></b>
</aside>

<section class="docks">
<div class="dtitle t1"><i></i><span>ブラウザ</span><i></i><svg><use href="#restore"/></svg><svg><use href="#close"/></svg></div>
<div class="btools"><svg class="r"><use href="#refresh"/></svg><svg class="p"><use href="#plus"/></svg><span>追加</span><svg class="f"><use href="#funnel"/></svg><svg class="u"><use href="#pup"/></svg></div>
<div class="box browser">
<ul class="tree">
<li><em>+</em><svg><use href="#home"/></svg><span>ホーム</span></li>
<li><em>+</em><svg><use href="#fav"/></svg><span class="tight">お気に入り</span></li>
<li><em>+</em><svg><use href="#folder"/></svg><span class="drive">C:/</span></li>
<li><em>+</em><svg><use href="#folder"/></svg><span class="drive">D:/</span></li>
<li><em>+</em><svg><use href="#folder"/></svg><span class="drive">E:/</span></li>
<li><em>+</em><svg><use href="#folder"/></svg><span class="drive">F:/</span></li>
</ul>
<div class="scroll"><a class="up"></a><a class="thumb"></a><u></u><a class="up"></a><a class="down"></a></div>
</div>
<i class="split"></i>
<div class="dtitle t2"><i></i><span>レイヤ</span><i></i><svg><use href="#restore"/></svg><svg><use href="#close"/></svg></div>
<div class="box legend">
<div class="lrow"><em>−</em><span class="chk">✖</span><svg width="18" height="14"><use href="#poly"/></svg><strong>t1</strong></div>
<div class="swrow"><i></i><span class="swatch"></span></div>
</div>
<i class="split"></i>
<div class="dtitle t3"><i></i><span>地物情報</span><i></i><svg><use href="#restore"/></svg><svg><use href="#close"/></svg></div>
<div class="view"><label>ビュー</label><span class="combo"><span>ツリー</span><s></s></span></div>
<div class="box attrs">
<div class="grid">
<div class="head"><span>地物<svg width="12" height="9"><path d="M1 8l5-7 5 7z" fill="#dedbd4" stroke="#aaa7a0"/></svg></span><span>値</span></div>
<div class="ar l0"><em>−</em><span>t1</span></div>
<div class="ar l1 sel"><em>−</em><span>gid</span><q>8</q></div>
<div class="ar l2"><em>+</em><span>(アクション)</span></div>
<div class="ar l2 alt"><em>+</em><span>(派生した…</span></div>
<div class="ar l2"><i></i><span>gid</span><q>8</q></div>
<div class="ar l2 alt"><i></i><span>n03_001</span><q>広島県</q></div>
</div>
<div class="scroll"><a class="up"></a><a class="thumb"></a><u></u><a class="up"></a><a class="down"></a></div>
</div>
<div class="tbtns"><button><svg><use href="#pdown"/></svg></button><button><svg><use href="#pup"/></svg></button><button><svg><use href="#pstar"/></svg></button><button><svg><use href="#plist"/></svg></button><button><svg><use href="#desel"/></svg></button><button><svg><use href="#copy"/></svg></button><button><svg><use href="#printer"/></svg></button><button class="help">ヘルプ</button></div>
<div class="mode"><label>モード</label><span class="combo"><span>カレントレイヤ</span><s></s></span><span class="empty"></span><label class="auto">自動的にフォームを開く</label></div>
<i class="split s4"></i>
<div class="dtitle t4"><i></i><span>最短経路</span><i></i><svg><use href="#restore"/></svg><svg><use href="#close"/></svg></div>
<form class="route">
<label class="cap a">開始点</label>
<div class="rrow"><span class="field"></span><span class="pick"><svg><use href="#fourway"/></svg></span></div>
<label class="cap b">終了点</label>
<div class="rrow"><span class="field"></span><span class="pick"><svg><use href="#fourway"/></svg></span></div>
<div class="rrow crit"><label>判定基準</label><span class="combo"><span>長さ</span><s></s></span></div>
<div class="rrow len"><label>長さ</label><span class="field"></span></div>
<div class="rrow time"><label>時間</label><span class="field"></span></div>
<div class="rrow acts"><span class="btn">計算</span><span class="btn kana">エクスポート</span><span class="btn kana">クリア</span></div>
<div class="btn kana wide"><svg width="18" height="18"><use href="#ring"/></svg>ヘルプ</div>
</form>
</section>

<section class="map">
<svg width="695" height="752" viewBox="359 164 695 752">
<g class="land" transform="translate(360 260) scale(.33333)" filter="url(#coast)">
<path d="M180 580L205 562 248 538 270 536 278 520 304 522 314 492 334 474 332 442 355 438 382 455 390 474 410 480 424 462 438 448 446 460 470 462 495 452 522 450 528 468 548 476 562 462 584 452 583 434 602 422 626 440 640 447 680 452 698 448 716 444 742 458 762 440 784 436 818 408 840 404 848 391 880 396 918 404 930 384 945 380 955 388 975 382 966 340 935 334 928 322 912 326 902 314 872 310 900 286 920 270 942 243 970 238 992 246 1006 236 1026 232 1024 206 1052 185 1080 170 1085 155 1110 138 1120 118 1150 108 1138 92 1170 55 1195 38 1230 32 1248 56 1305 72 1340 62 1345 45 1360 38 1388 50 1400 66 1426 84 1452 66 1490 66 1530 60 1550 72 1568 86 1595 78 1615 84 1650 76 1685 82 1690 68 1712 68 1735 95 1745 110 1775 130 1790 155 1810 165 1810 195 1790 212 1780 238 1792 262 1786 290 1778 325 1800 350 1825 376 1832 402 1855 408 1888 435 1886 465 1876 490 1874 515 1865 540 1880 568 1860 700 1800 980 1765 985 1730 965 1695 978 1670 985 1630 998 1590 1008 1540 1022 1505 1012 1488 1005 1498 1015 1488 1050 1480 1070 1450 1080 1425 1090 1385 1092 1340 1085 1300 1085 1280 1095 1245 1098 1210 1115 1190 1130 1170 1145 1155 1130 1140 1115 1105 1118 1085 1140 1078 1162 1050 1160 1035 1165 1060 1195 1040 1212 990 1212 945 1230 940 1250 905 1265 870 1265 850 1255 845 1232 835 1245 822 1232 810 1255 780 1270 745 1278 750 1255 735 1240 765 1225 740 1210 712 1200 710 1160 700 1138 682 1115 690 1095 715 1060 700 1055 660 1062 610 1065 580 1053 550 1047 520 1055 500 1060 470 1070 445 1082 440 1105 400 1140 375 1168 330 1188 318 1215 340 1245 330 1255 290 1265 270 1260 280 1235 240 1230 205 1220 200 1190 180 1150 178 1110 175 1092 150 1095 135 1065 100 1055 105 1020 100 980 110 935 90 905 75 860 50 862 90 815 125 810 165 765 178 745 180 740 164 712 182 675 200 645 224 600 198 596z"/>
<path class="line" d="M195 650L208 667 246 660 250 642 266 620 284 636 302 632 314 612 344 618 368 638 400 608 418 616 436 578 456 565 474 584 492 592 488 640 478 650 494 680 494 702 515 712 552 708 556 718 580 722 606 734 638 704 658 704 688 732 716 716 736 746 782 736 790 690 814 650 804 636 828 606 810 604 794 594 794 560 808 542 780 520 780 498 760 474 742 458M736 746L760 752 792 772 830 740 836 724 880 726 922 710 952 740 940 770 952 812M556 718L540 728 536 770 500 800M975 382L990 395 990 410 960 414 956 425 985 428 1072 442 1065 490 1052 512 1082 522 1058 580 1108 600 1075 660 1095 690 1080 740 1050 755 990 785 975 790 940 822 900 830 890 850 860 872 830 880 832 900 825 920M1052 185L1120 192 1140 172 1155 175 1142 210 1145 240 1170 262 1162 280 1200 300 1205 325 1225 328 1212 370 1290 430 1308 458 1340 422 1365 440 1412 470 1395 498 1425 518 1445 510 1455 488 1515 495 1518 540 1508 600 1488 635M1518 540L1530 538 1560 512 1595 510 1600 495 1560 465 1570 440 1560 410 1595 376 1635 382 1665 365 1680 385 1695 415 1708 430 1745 405 1750 376 1790 382 1825 376M1595 510V545L1645 590 1625 630 1670 655 1695 660M1488 635L1430 632 1390 618 1350 620 1325 645 1295 640 1285 612 1222 608 1205 650 1195 700 1230 740M1100 695L1155 715 1195 705M1488 635L1540 665 1580 680 1590 705 1575 740 1550 790 1490 808 1425 775 1370 790 1290 748 1250 733 1230 745 1210 760 1210 785 1170 805 1180 828 1230 835 1230 860 1260 900 1225 910 1240 950 1225 985 1140 975 1080 970 1120 1000 1080 1030 1130 1040 1178 1065 1170 1140M1240 950L1245 1010 1290 1030 1320 1060 1380 1070 1388 1092M1490 808L1470 825 1445 855 1465 870 1520 868 1535 895 1565 925 1585 950 1565 980 1590 1005M1575 765L1610 795 1650 815 1680 812M178 745L215 785 255 805 232 825 260 865 275 895 250 935 270 975 300 975 320 955 390 982 398 1012 415 1015 430 975 445 1010 475 1045 490 1065M275 870L285 845 330 845 345 820 400 795 495 785 500 800 475 825 470 838 530 840 545 875 600 868 660 875 672 845 695 842 700 870 675 935M465 840L440 885 428 920 455 942 505 930 570 958 635 962 680 935 730 928 770 912 785 945 740 970 690 1005 650 1002 638 970 610 1010 580 1052M570 958L555 990 530 995 535 1020 515 1045M645 1000L640 1030 610 1065M785 945L825 920 870 930 912 950 885 985 895 1040 865 1065 835 1085 840 1105 820 1125 765 1110 740 1115M690 1005L712 1040 750 1018 795 1030 860 1030 865 1060M740 970L705 1020M795 1030L775 1065 760 1075 765 1110M712 1045L735 1090 735 1120 700 1138M712 1050L755 1055M820 1125L840 1110 890 1115 912 1148 970 1115 1035 1090 1045 1150 1078 1162M180 1115L210 1095 235 1095 238 1130 270 1158 320 1155 328 1188M228 1130L268 1125 265 1145M270 1090V1105M295 1138L320 1130M305 1120L312 1150"/>
<path d="M365 1200L390 1155 440 1140 460 1120 480 1155 430 1195 378 1225zM515 1188L575 1190 610 1235 635 1230 655 1258 660 1215 625 1200 600 1205 598 1185 620 1175 600 1155 665 1150 685 1185 680 1240 655 1275 650 1300 672 1340 670 1352 600 1365 590 1370 612 1335 615 1300 600 1285 590 1305 580 1270 535 1230 530 1200zM680 1340L685 1300 710 1280 745 1275 765 1300 765 1315 740 1305 720 1325 740 1340 770 1340 755 1350 745 1385 745 1400 780 1380 800 1370 812 1395 790 1390 775 1410 765 1435 745 1405 720 1405 700 1410 640 1430 615 1400 625 1380 665 1372 700 1355 700 1345zM527 1302L565 1310 572 1330 545 1342 527 1325zM572 1132L590 1125 598 1102 612 1102 605 1130 595 1135zM888 1305L900 1278 920 1268 937 1285 930 1300 900 1312zM945 1270L975 1263 1010 1275 1040 1285 1050 1310 1030 1320 1000 1305 950 1300zM1062 1312L1078 1288 1095 1302 1078 1325zM1102 1315L1155 1280 1190 1300 1175 1320 1120 1338zM1155 1220L1190 1208 1230 1195 1240 1205 1265 1165 1290 1160 1280 1200 1255 1225 1262 1255 1195 1262 1160 1240zM1468 1165L1490 1130 1510 1120 1570 1115 1565 1100 1570 1060 1610 1058 1620 1090 1645 1085 1658 1115 1630 1135 1645 1165 1610 1145 1550 1170 1490 1195 1470 1185zM1505 1100L1515 1055 1535 1055 1542 1080 1530 1110zM1460 1115L1480 1090 1488 1110 1470 1130zM1610 1005L1690 990 1695 1010 1670 1050 1630 1045 1612 1025zM1730 1085L1750 1060 1765 1060 1760 1080zM1770 1065L1810 1038 1835 1045 1820 1065 1780 1070zM1725 1025L1752 1025 1738 1048zM1725 1008L1765 988 1760 1003zM1585 1015L1605 1015 1608 1035zM1710 1000L1725 998 1722 1012 1708 1010zM1960 1070L1975 1067 1990 1082 1972 1082zM1905 1015L1920 1015 1925 1027zM403 1278L438 1275 435 1290 405 1290zM500 1163L522 1165 515 1170zM720 1480L733 1445 742 1450 732 1480zM785 1323L798 1318 792 1332zM655 1070L668 1078 660 1090zM678 1075L700 1068 695 1085zM630 1063L638 1080 630 1075zM745 1445L768 1440 765 1450zM590 1335L608 1328 600 1345zM1090 1165L1115 1160 1105 1175zM1245 1145L1265 1138 1270 1150 1250 1160zM1185 1180L1200 1172 1205 1190 1190 1195zM1355 1122L1365 1115 1370 1125zM950 1240L962 1240 955 1248zM1108 1283L1125 1278 1120 1288zM1040 1335L1060 1335 1050 1345zM895 1330L905 1333 900 1338zM915 1330L925 1335 918 1338zM450 1070L475 1062 480 1072 455 1080zM665 1490L682 1480 670 1495zM1695 1030L1706 1028 1704 1036zM1998 1113H2015L2010 1120zM1285 1100L1303 1120M487 1213L493 1218M433 1376L443 1382M632 1112L640 1118M552 1112L556 1115M610 1455L616 1458M625 1460L645 1466M710 1482L716 1488M1212 1155L1218 1175M1235 1180L1240 1187M1050 1183H1060M1073 1188V1197M1148 1195L1154 1200M1342 1120V1124M1100 1232L1106 1238M1080 1378H1100M1955 1045V1050M2010 1056L2014 1060M1440 1150L1444 1153M1725 1090L1732 1093M500 1147L508 1153"/>
<path class="picked" d="M1860 570L1875 570 1882 590 1902 612 1928 628 1924 650 1918 665 1898 695 1920 735 1952 748 1968 770 1988 788 1994 815 1988 840 1998 862 1982 892 1982 930 1965 964 1925 942 1920 958 1898 975 1895 1015 1875 1038 1850 1046 1835 1026 1805 1024 1765 1010 1775 990 1745 970 1730 945 1715 965 1702 952 1695 930 1680 930 1688 915 1662 900 1690 885 1700 845 1668 845 1662 832 1680 820 1710 805 1742 780 1735 755 1710 730 1692 710 1693 690 1688 675 1710 655 1732 642 1745 630 1768 628 1770 650 1790 655 1802 675 1815 655 1830 645 1835 622 1860 605 1880 590z"/>
<path class="picked inlet" d="M1890 887L1968 890M1932 895L1932 915 1970 938M1920 945L1960 962"/>
</g>
</svg>
</section>
</main>

<footer class="status">
<span class="cell ico"><svg><use href="#mouse"/></svg></span><span class="cell crd">座標:</span><span class="input">131.995,34.476</span><span class="cell sc">縮尺</span><span class="combo scale"><span>1:566,516</span><s></s></span><span class="cell ren"><span class="chk">✖</span>レンダ</span><span class="cell epsg">EPSG:4612</span><span class="cell ico g"><svg><use href="#globe"/></svg></span>
<svg class="size" width="15" height="15"><path d="M2 14L14 2M6 14l8-8M10 14l4-4" stroke="#8d8980" stroke-width="1.500"/></svg>
</footer>
</div>

<!-- hand-drawn callouts over the window -->
<svg class="notes" width="1058" height="946" viewBox="0 0 1058 946">
<g class="frames"><rect x="659.5" y="39.500" width="61" height="53"/><rect x="41" y="326.500" width="317" height="57"/><rect x="41.500" y="421.500" width="317" height="227"/><rect x="884.500" y="431.500" width="160" height="209"/></g>
<path d="M361 350L668 103M627 111L668 103 665 130M715 103L931 422M901 407L931 422 937 387M868 538L372 550M873 553L376 564M391 525L367 556 383 584"/>
</svg>
</body>
</html>
```

FILE: styles.css
```css
*{box-sizing:border-box}
body{margin:0;width:1058px;height:946px;overflow:hidden;position:relative;background:#d4d0c8;color:#000;font:12px/14px "Liberation Sans","Noto Sans CJK JP",sans-serif;font-feature-settings:"palt";letter-spacing:-.3px}
.defs{position:absolute}
i,em,s,b,q,u{font-style:normal;font-weight:normal;text-decoration:none;quotes:none}
svg{display:block;flex:none}
.window{width:1058px;height:946px;display:flex;flex-direction:column;padding:2px 3px 3px 3px;border:1px solid #d4d0c8;border-top-color:#eee;border-bottom:2px solid #404040;border-right:1px solid #404040;box-shadow:inset 1px 1px 0 #fff,inset -1px -1px 0 #808080}
.titlebar{height:19px;margin-top:1px;flex:none;display:flex;align-items:center;background:linear-gradient(90deg,#0a246a,#a6caf0);padding:0 3px 0 4px}
.logo{margin-right:1px}
.app{color:#fff;font-weight:bold;letter-spacing:.15px;flex:1;padding-left:1px}
.winbtn{width:16px;height:14px;background:#d4d0c8;border:1px solid;border-color:#fff #404040 #404040 #fff;box-shadow:inset -1px -1px 0 #808080}
.winbtn svg{margin:-1px}
.winbtn.last{margin-left:2px}
.menu{height:22px;flex:none;display:grid;grid-template-columns:82px 54px 58px 56px 54px 74px 56px 57px 88px 52px 79px 60px;padding-left:9px;align-items:center;border-bottom:1px solid #9c9890;letter-spacing:-1.800px;white-space:nowrap}
.menu .k{letter-spacing:-.4px}
.menu kbd{font:inherit;letter-spacing:-.3px;margin-left:1.500px}
.menu u{text-decoration:underline}
.toolbar{height:39px;flex:none;display:flex;align-items:center;border-bottom:1px solid #9c9890;box-shadow:0 1px 0 #dedbd4}
.toolbar.low{height:38px}
.toolbar b{width:35px;height:36px;display:flex;align-items:center;justify-content:center;flex:none}
.toolbar svg{width:24px;height:24px}
.toolbar svg.big{width:26px;height:26px}
.toolbar .pressed{width:34px;height:34px;margin-right:1px;background:#bbb7b0;border:1px solid #77736c;border-radius:3px}
.toolbar .pressed svg{width:26px;height:26px}
.toolbar s{width:12px;display:flex;justify-content:center}
s::after{content:"";border:5px solid transparent;border-top-color:#000;border-bottom:0;display:block}
s.off::after{border-top-color:#8d8a83}
.grip,.hgrip,.split,.dtitle i{background:radial-gradient(circle at 1.500px 1.500px,#fff 1px,#aaa69e 1.200px,transparent 1.900px) 0 0/6px 6px,radial-gradient(circle at 1.500px 1.500px,#fff 1px,#aaa69e 1.200px,transparent 1.900px) 3px 3px/6px 6px}
.grip{width:6px;height:30px;margin-left:8px;flex:none}
.grip.first{margin-left:6px}
.sep{width:2px;height:30px;margin-left:1px;background:#fff;border-left:1px solid #aaa}
.mini{position:relative}
.mini::after{content:"";position:absolute;right:3px;bottom:3px;border:3px solid transparent;border-top-color:#888;border-bottom:0}
.more{margin-left:auto;font-weight:bold;font-size:15px;letter-spacing:0}
.more+.grip{margin-left:9px}
.more.end{margin:0 4px 0 2px}
.main{height:756px;flex:none;display:flex}
.layers{width:52px;border-right:1px solid #9c9890;margin:2px 0 1px;display:flex;flex-direction:column;align-items:center}
.layers b{height:34.100px;width:50px;display:flex;align-items:center;justify-content:center;flex:none;position:relative;padding-left:2px}
.layers svg{width:25px;height:25px}
.hgrip{width:42px;height:5px;margin:5px 0 -1px;flex:none}
.hgrip.second{margin:9px 0 0}
.drop::after{content:"";position:absolute;right:3px;top:14px;border:4px solid transparent;border-top-color:#000;border-bottom:0}
.docks{width:300px;flex:none;display:flex;flex-direction:column}
.dtitle{height:16px;margin:2px 8px 0 2px;display:flex;align-items:center;flex:none}
.dtitle i{height:5px;flex:1}
.dtitle span{margin:0 6px;letter-spacing:-1.300px}
.dtitle svg{width:14px;height:14px;margin-left:1px}
.dtitle.t3 span,.dtitle.t4 span{letter-spacing:-.900px;font-weight:bold;margin:0 7px}
.btools{display:flex;align-items:center;height:26px;margin:7px 0 5px 10px;flex:none}
.btools .r{width:16px;height:16px}
.btools .p{width:14px;height:14px;margin:0 5px 0 17px}
.btools .f{width:16px;height:16px;margin:0 15px 0 22px}
.btools .u{width:16px;height:16px}
.box{width:293px;margin-left:1px;background:#fff;border:1px solid #8e8b84;outline:1px solid #b7b4ad;outline-offset:-2px;border-radius:2px;flex:none;display:flex;overflow:hidden;padding:1px}
.browser{height:94px}
.tree{list-style:none;margin:0;padding:0;flex:1}
.tree li{height:16px;display:flex;align-items:center;padding-left:5px;letter-spacing:-.8px}
.tree svg{width:16px;height:16px;margin:0 4px 0 9px}
.tree .tight{letter-spacing:-1.500px}
.tree .drive{letter-spacing:.2px}
em{width:9px;height:9px;border:1px solid #85827a;font-size:11px;line-height:7px;text-align:center;letter-spacing:0;flex:none;background:#f5f4f2;overflow:visible;position:relative;color:#333}
em::after{content:"";position:absolute;left:9px;top:3px;width:6px;border-top:1px dotted #888}
.scroll{width:16px;height:100%;display:flex;flex-direction:column;flex:none}
.scroll a{height:15px;border:1px solid #85827a;border-radius:2px;background:linear-gradient(#e3e0da,#c5c2bb);display:flex;align-items:center;justify-content:center;flex:none}
.scroll a.thumb{height:26px}
.scroll u{flex:1;background:repeating-conic-gradient(#c9c6bf 0 25%,#f4f3f1 0 50%) 0 0/2px 2px}
.up::after,.down::after{content:"";border:4px solid transparent;border-bottom-color:#000;border-top:0}
.down::after{border-bottom:0;border-top:4px solid #000}
.split{width:94px;height:3px;margin:2px 0 0 97px;flex:none;background-size:5px 6px,0 0}
.dtitle.t2{margin-top:2px}
.legend{height:93px;margin-top:4px;flex-direction:column;padding:0}
.lrow{height:17px;background:#d4d0c8;display:flex;align-items:center;padding-left:6px}
.chk{width:12px;height:12px;background:#fff;border:1px solid #bbb;font:bold 12px/11px "DejaVu Sans",sans-serif;display:flex;align-items:center;justify-content:center;letter-spacing:0}
.lrow .chk{margin:0 6px 0 9px}
.lrow strong{text-decoration:underline;margin-left:5px;font-size:13px;letter-spacing:0}
.swrow{display:flex;padding-left:31px}
.swrow i{width:10px;height:8px;border:dotted #888;border-width:0 0 1px 1px;margin-right:2px}
.swatch{width:16px;height:16px;background:#94f832;border:1px solid #3d6b18}
.view{display:flex;align-items:center;height:20px;margin:12px 0 9px;color:#77746d;text-shadow:1px 1px 0 #fff;flex:none}
.view label{width:32px;letter-spacing:-2px;white-space:nowrap}
.combo{height:20px;display:flex;align-items:center;border:1px solid #8e8b84;border-radius:2px;background:linear-gradient(#dedbd4,#c6c3bc);white-space:nowrap}
.combo>span{flex:1;padding-left:4px;letter-spacing:-1.200px}
.combo s{width:16px;height:100%;border-left:1px solid #9c9890;display:flex;align-items:center;justify-content:center}
.combo s::after{border-width:4px;border-bottom:0}
.view .combo{width:72px}
.view s::after{border-top-color:#77746d}
.attrs{height:94px}
.grid{flex:1;overflow:hidden}
.head{height:19px;display:flex}
.head span{width:133px;border:1px solid #85827a;border-left-color:#eee;background:linear-gradient(#dedbd4,#c6c3bc);padding:2px 3px;display:flex;justify-content:space-between;align-items:center}
.head svg{margin-right:3px}
.head span+span{flex:1}
.ar{height:12px;display:flex;align-items:center;position:relative;letter-spacing:0;white-space:nowrap}
.ar span{margin-left:8px}
.ar q{position:absolute;left:136px}
.l0{padding-left:5px}.l1{padding-left:25px}.l2{padding-left:45px}
.l2 i{width:9px;border-bottom:1px dotted #999;margin-left:0}
.l2 em+span{letter-spacing:-1px}
.ar.sel{background:#d4d0c8}.ar.alt{background:#f4f4f4}
.tbtns{display:flex;height:25px;margin:0 0 0 1px;flex:none}
.tbtns button{width:25px;height:25px;margin:0 7px 0 0;padding:0;border:1px solid #85827a;border-radius:3px;background:linear-gradient(#dedbd4,#cac6bf);display:flex;align-items:center;justify-content:center;font:inherit;letter-spacing:-1.300px}
.tbtns button svg{width:16px;height:16px}
.tbtns .help{width:47px;height:20px;margin:2px 0 0 22px}
.mode{display:flex;height:19px;align-items:center;flex:none;white-space:nowrap}
.mode label{width:34px;letter-spacing:-1.500px;flex:none}
.mode .combo{width:122px;height:19px}
.empty{width:13px;height:13px;background:#fff;border:1px solid #aaa;margin:0 5px 0 6px}
.mode .auto{width:110px;letter-spacing:-1.300px}
.split.s4{margin-top:3px}
.dtitle.t4{margin-top:3px}
.route{margin:0 0 0 9px;width:276px}
.cap{display:block;height:14px;margin:11px 0 2px}
.cap.b{margin:7px 0 2px}
.rrow{display:flex;align-items:center;height:26px;white-space:nowrap}
.field{height:20px;flex:1;background:#fff;border:1px solid #8e8b84;border-radius:2px;box-shadow:inset 1px 1px 0 #c9c6bf}
.pick{width:26px;height:25px;margin-left:7px;border:1px solid #77736c;border-radius:2px;background:linear-gradient(#dedbd4,#c9c6bf);display:flex;align-items:center;justify-content:center}
.pick svg{width:16px;height:16px}
.rrow.crit{margin-top:5px;height:25px;justify-content:space-between}
.crit .combo{width:135px}
.len label{width:25px}.time label{width:29px}
.rrow.time,.rrow.len{height:27px}
.rrow.acts{gap:10px;height:27px;margin-top:4px}
.btn{flex:1;height:23px;border:1px solid #8e8b84;border-radius:2px;background:linear-gradient(#dedbd4,#c0bdb5);display:flex;align-items:center;justify-content:center;gap:4px}
.btn.kana{letter-spacing:-1.300px}
.btn.wide{height:26px;margin-top:7px}
.map{width:699px;height:755px;margin-top:1px;background:#fff;border:2px solid #1d3c7c;border-radius:2px;overflow:hidden}
.land path{fill:#94f832;stroke:#26401a;stroke-width:3;stroke-linejoin:round}
.land .line{fill:none}
.land .picked{fill:#c87a19;stroke:red;stroke-width:17}
.land .inlet{fill:none;stroke-linecap:round}
.status{height:26px;display:flex;align-items:center;padding-left:388px;flex:none}
.cell{height:21px;border:1px solid #9c9890;display:flex;align-items:center;justify-content:center;margin-right:2px;white-space:nowrap;flex:none}
.ico{width:24px;background:#c5c2bb;border-color:#807d76;border-radius:2px}
.ico svg{width:18px;height:18px}
.crd{width:36px}
.input{width:304px;height:21px;background:#fff;border:2px solid #9c9890;border-radius:2px;display:flex;align-items:center;justify-content:center;margin-right:2px;flex:none;letter-spacing:-.6px}
.sc{width:35px;margin-right:1px}
.scale{width:87px;background:#fff;margin-right:2px;flex:none}
.scale s{background:linear-gradient(#dedbd4,#c6c3bc)}
.combo.scale>span{letter-spacing:-.8px}
.ren{width:56px;letter-spacing:-1.500px}
.ren .chk{margin-right:7px}
.epsg{width:65px;color:#85827a;text-shadow:1px 1px 0 #fff;letter-spacing:-.6px}
.size{margin-left:auto}
.notes{position:absolute;left:0;top:0;pointer-events:none}
.notes rect,.notes path{fill:none;stroke:#ed1c24;stroke-width:5}
.notes path{stroke-linecap:round;stroke-linejoin:round}
```
